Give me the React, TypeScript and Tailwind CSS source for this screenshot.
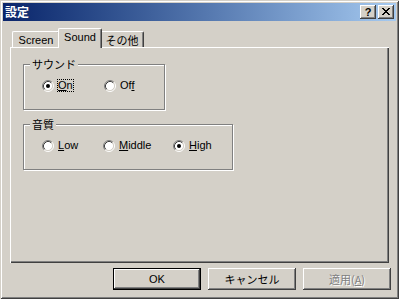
import React from "react";

function Radio({ checked }: { checked?: boolean }) {
  return (
    <svg width="12" height="12" viewBox="0 0 12 12" className="shrink-0 block">
      <circle cx="6" cy="6" r="4.5" fill="#ffffff" />
      <path d="M2.11 9.89 A5.5 5.5 0 0 1 9.89 2.11" fill="none" stroke="#808080" strokeWidth="1" />
      <path d="M9.89 2.11 A5.5 5.5 0 0 1 2.11 9.89" fill="none" stroke="#ffffff" strokeWidth="1" />
      <path d="M2.82 9.18 A4.5 4.5 0 0 1 9.18 2.82" fill="none" stroke="#404040" strokeWidth="1" />
      <path d="M9.18 2.82 A4.5 4.5 0 0 1 2.82 9.18" fill="none" stroke="#d4d0c8" strokeWidth="1" />
      {checked && <circle cx="6" cy="6" r="2" fill="#000000" />}
    </svg>
  );
}

function RadioItem({
  checked,
  focus,
  width,
  children,
}: {
  checked?: boolean;
  focus?: boolean;
  width: string;
  children: React.ReactNode;
}) {
  return (
    <div className={`flex items-center h-[13px] ${width}`}>
      <Radio checked={checked} />
      <span
        className={
          focus
            ? "ml-[3px] border border-dotted border-black px-0 leading-[11px] h-[13px]"
            : "ml-[3px] border border-transparent px-0 leading-[11px] h-[13px]"
        }
      >
        {children}
      </span>
    </div>
  );
}

function GroupBox({
  label,
  width,
  extra,
  children,
}: {
  label: string;
  width: string;
  extra?: string;
  children: React.ReactNode;
}) {
  return (
    <div
      className={`relative h-[46px] border border-[#808080] shadow-[inset_1px_1px_#ffffff,1px_1px_#ffffff] pt-[14px] pl-[18px] flex items-start ${width} ${extra ?? ""}`}
    >
      <span className="absolute left-[6px] top-[-8px] bg-[#d4d0c8] px-[2px] leading-[14px] text-[11px] font-['Noto_Sans_CJK_JP',sans-serif]">
        {label}
      </span>
      {children}
    </div>
  );
}

const btnBevel =
  "shadow-[inset_-1px_-1px_#404040,inset_1px_1px_#ffffff,inset_-2px_-2px_#808080,inset_2px_2px_#d4d0c8]";

export default function App() {
  return (
    <div className="w-[399px] h-[299px] overflow-hidden bg-[#d4d0c8] shadow-[inset_1px_1px_#d4d0c8,inset_-1px_-1px_#404040,inset_2px_2px_#ffffff,inset_-2px_-2px_#808080] p-[3px] flex flex-col text-[11px] text-black font-['Liberation_Sans','Noto_Sans_CJK_JP',sans-serif]">
      {/* Title bar */}
      <div className="h-[18px] shrink-0 bg-linear-to-r from-[#0a246a] to-[#a6caf0] flex items-center pl-[2px] pr-[2px]">
        <span className="text-white font-bold text-[12px] leading-[18px] font-['Noto_Sans_CJK_JP',sans-serif]">
          設定
        </span>
        <div className="ml-auto flex gap-[2px]">
          <div
            className={`w-[16px] h-[14px] bg-[#d4d0c8] ${btnBevel} flex items-center justify-center text-[11px] font-bold leading-[14px] text-black font-['Liberation_Sans',sans-serif]`}
          >
            ?
          </div>
          <div className={`w-[16px] h-[14px] bg-[#d4d0c8] ${btnBevel} relative`}>
            <svg width="8" height="7" viewBox="0 0 8 7" className="absolute left-[4px] top-[3px]" shapeRendering="crispEdges">
              <rect x="0" y="0" width="2" height="1" fill="#000" />
              <rect x="6" y="0" width="2" height="1" fill="#000" />
              <rect x="1" y="1" width="2" height="1" fill="#000" />
              <rect x="5" y="1" width="2" height="1" fill="#000" />
              <rect x="2" y="2" width="4" height="1" fill="#000" />
              <rect x="3" y="3" width="2" height="1" fill="#000" />
              <rect x="2" y="4" width="4" height="1" fill="#000" />
              <rect x="1" y="5" width="2" height="1" fill="#000" />
              <rect x="5" y="5" width="2" height="1" fill="#000" />
              <rect x="0" y="6" width="2" height="1" fill="#000" />
              <rect x="6" y="6" width="2" height="1" fill="#000" />
            </svg>
          </div>
        </div>
      </div>

      {/* Body */}
      <div className="px-[7px] pt-[7px] flex flex-col">
        {/* Tabs */}
        <div className="flex items-end pl-[2px] h-[19px]">
          <div className="w-[48px] h-[16px] border-t border-l border-white border-r border-r-[#404040] shadow-[inset_-1px_0_#808080] rounded-tl-[2px] rounded-tr-[2px] flex items-center justify-center leading-[13px] pt-[1px]">
            Screen
          </div>
          <div className="relative z-10 w-[44px] h-[20px] -mx-[2px] -mb-px bg-[#d4d0c8] border-t border-l border-white border-r border-r-[#404040] shadow-[inset_-1px_0_#808080] rounded-tl-[2px] rounded-tr-[2px] flex items-center justify-center leading-[13px] pb-[2px]">
            Sound
          </div>
          <div className="w-[44px] h-[16px] border-t border-l border-white border-r border-r-[#404040] shadow-[inset_-1px_0_#808080] rounded-tl-[2px] rounded-tr-[2px] flex items-center justify-center leading-[13px] pt-[1px] font-['Noto_Sans_CJK_JP',sans-serif]">
            その他
          </div>
        </div>

        {/* Panel */}
        <div className="h-[216px] shadow-[inset_1px_1px_#ffffff,inset_-1px_-1px_#404040,inset_-2px_-2px_#808080] pl-[13px] pt-[17px] flex flex-col items-start">
          <GroupBox label="サウンド" width="w-[142px]">
            <RadioItem checked focus width="w-[62px]">
              <span className="underline underline-offset-[1px]">O</span>n
            </RadioItem>
            <RadioItem width="w-[40px]">
              O<span>f</span>
              <span className="underline underline-offset-[1px]">f</span>
            </RadioItem>
          </GroupBox>
          <GroupBox label="音質" width="w-[210px]" extra="mt-[14px]">
            <RadioItem width="w-[61px]">
              <span className="underline underline-offset-[1px]">L</span>ow
            </RadioItem>
            <RadioItem width="w-[70px]">
              <span className="underline underline-offset-[1px]">M</span>iddle
            </RadioItem>
            <RadioItem checked width="w-[50px]">
              <span className="underline underline-offset-[1px]">H</span>igh
            </RadioItem>
          </GroupBox>
        </div>
      </div>

      {/* Buttons */}
      <div className="mt-[5px] flex justify-end gap-[7px] pr-[5px]">
        <div className={`w-[88px] h-[22px] border border-black bg-[#d4d0c8] ${btnBevel} flex items-center justify-center leading-[13px]`}>
          OK
        </div>
        <div className={`w-[88px] h-[22px] bg-[#d4d0c8] ${btnBevel} flex items-center justify-center leading-[13px] font-['Noto_Sans_CJK_JP',sans-serif]`}>
          キャンセル
        </div>
        <div className={`w-[88px] h-[22px] bg-[#d4d0c8] ${btnBevel} flex items-center justify-center leading-[13px] text-[#808080] [text-shadow:1px_1px_0_#ffffff] font-['Noto_Sans_CJK_JP',sans-serif]`}>
          適用(<span className="underline underline-offset-[1px]">A</span>)
        </div>
      </div>
    </div>
  );
}
